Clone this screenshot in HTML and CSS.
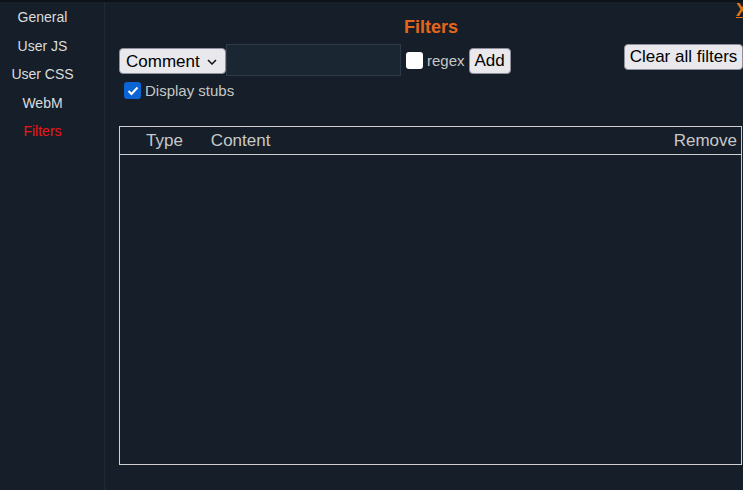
FILE: index.html
```html
<!DOCTYPE html>
<html>
<head>
<meta charset="utf-8">
<link rel="stylesheet" href="styles.css">
</head>
<body>
<div class="strip"></div>
<div class="layout">
  <nav class="nav">
    <div class="nav-item">General</div>
    <div class="nav-item">User JS</div>
    <div class="nav-item">User CSS</div>
    <div class="nav-item">WebM</div>
    <div class="nav-item active">Filters</div>
  </nav>
  <main class="main">
    <a class="close">X</a>
    <h1 class="title">Filters</h1>
    <div class="controls">
      <div class="controls-left">
        <div class="row">
          <div class="select">Comment <svg class="chev" width="10" height="6" viewBox="0 0 10 6"><path d="M1 1l4 4 4-4" fill="none" stroke="#111" stroke-width="1.5"/></svg></div>
          <div class="text-input"></div>
          <span class="check"></span>
          <span class="label">regex</span>
          <button class="btn add">Add</button>
        </div>
        <div class="row stubs">
          <span class="check checked"><svg width="12" height="10" viewBox="0 0 12 10"><path d="M1.5 5l3 3 6-6.5" fill="none" stroke="#fff" stroke-width="2"/></svg></span>
          <span class="label">Display stubs</span>
        </div>
      </div>
      <button class="btn clear">Clear all filters</button>
    </div>
    <div class="table">
      <div class="thead">
        <span class="th type">Type</span>
        <span class="th content">Content</span>
        <span class="th remove">Remove</span>
      </div>
    </div>
  </main>
</div>
</body>
</html>
```
FILE: styles.css
```css
html, body {
  margin: 0;
  padding: 0;
  background: #161f29;
  font-family: "Liberation Sans", Arial, sans-serif;
  height: 490px;
  overflow: hidden;
}
.strip {
  height: 2px;
  background: #0c1218;
}
.layout {
  display: flex;
  height: 488px;
}
.nav {
  width: 105px;
  border-right: 1px solid #1d2935;
  padding-top: 1px;
  box-sizing: border-box;
  flex: none;
}
.nav-item {
  width: 85px;
  text-align: center;
  font-size: 14px;
  line-height: 28.5px;
  color: #dcdcdc;
}
.nav-item.active {
  color: #f11414;
}
.main {
  flex: 1;
  position: relative;
  padding: 16px 0 0 14px;
}
.close {
  position: absolute;
  right: -5px;
  top: -2px;
  color: #e4711c;
  font-weight: bold;
  font-size: 18px;
  text-decoration: underline;
}
.title {
  margin: 0;
  text-align: center;
  font-size: 18px;
  line-height: 19px;
  font-weight: bold;
  color: #e4661b;
}
.controls {
  display: flex;
  justify-content: space-between;
  align-items: flex-start;
  margin-top: 7px;
}
.row {
  display: flex;
  align-items: center;
}
.select {
  box-sizing: border-box;
  width: 107px;
  height: 26px;
  background: #e9e9ed;
  border: 1px solid #8f8f9d;
  border-radius: 4px;
  font-size: 17px;
  color: #000;
  display: flex;
  align-items: center;
  padding: 2px 0 0 6px;
  gap: 7px;
  margin-top: 1px;
}
.text-input {
  width: 175px;
  height: 32px;
  box-sizing: border-box;
  background: #1a2733;
  border: 1px solid #2c3a47;
}
.check {
  box-sizing: border-box;
  width: 17px;
  height: 17px;
  background: #fff;
  border-radius: 3px;
  margin-left: 5px;
  display: flex;
  align-items: center;
  justify-content: center;
}
.check.checked {
  background: #0b63d4;
}
.label {
  color: #c5c8c6;
  font-size: 15px;
  margin-left: 4px;
}
.btn {
  font-family: "Liberation Sans", Arial, sans-serif;
  font-size: 17px;
  background: #e9e9ed;
  border: 1px solid #8f8f9d;
  border-radius: 4px;
  color: #000;
  padding: 0 4px;
  height: 26px;
}
.add {
  margin-left: 4px;
  width: 42px;
  margin-top: 2px;
}
.clear {
  width: 119px;
  box-sizing: border-box;
  white-space: nowrap;
  padding: 0 2px;
}
.stubs {
  margin-top: 6px;
}
.table {
  margin-top: 27px;
  height: 339px;
  box-sizing: border-box;
  border: 1px solid #d0d0d0;
  margin-right: 1px;
}
.thead {
  display: flex;
  height: 28px;
  align-items: center;
  border-bottom: 1px solid #d0d0d0;
  color: #c8c8c8;
  font-size: 17px;
  box-sizing: border-box;
}
.th.type { margin-left: 26px; }
.th.content { margin-left: 28px; }
.th.remove { margin-left: auto; margin-right: 4px; }
```
